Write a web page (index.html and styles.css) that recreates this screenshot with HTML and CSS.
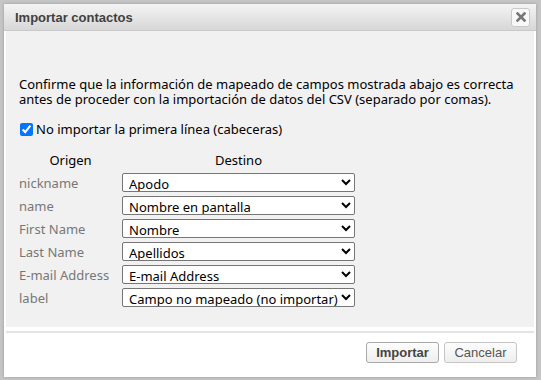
FILE: index.html
```html
<!DOCTYPE html>
<html lang="es">
<head>
  <meta charset="UTF-8" />
  <title>Importar contactos</title>
  <link rel="stylesheet" href="styles.css">
</head>
<body>
  <div class="dialog">
    <div class="titlebar">
      <span class="title">Importar contactos</span>
      <button class="close" title="Cerrar">
        <svg width="10" height="10" viewBox="0 0 10 10"><path d="M1.5 1.5 L8.5 8.5 M8.5 1.5 L1.5 8.5" stroke="#777" stroke-width="2.6" stroke-linecap="square"/></svg>
      </button>
    </div>
    <div class="content">
      <p class="intro">Confirme que la información de mapeado de campos mostrada abajo es correcta antes de proceder con la importación de datos del CSV (separado por comas).</p>
      <label class="skip"><input type="checkbox" checked /> No importar la primera línea (cabeceras)</label>
      <table class="mapping">
        <thead>
          <tr><th>Origen</th><th>Destino</th></tr>
        </thead>
        <tbody>
          <tr>
            <td class="src">nickname</td>
            <td><select><option>Apodo</option></select></td>
          </tr>
          <tr>
            <td class="src">name</td>
            <td><select><option>Nombre en pantalla</option></select></td>
          </tr>
          <tr>
            <td class="src">First Name</td>
            <td><select><option>Nombre</option></select></td>
          </tr>
          <tr>
            <td class="src">Last Name</td>
            <td><select><option>Apellidos</option></select></td>
          </tr>
          <tr>
            <td class="src">E-mail Address</td>
            <td><select><option>E-mail Address</option></select></td>
          </tr>
          <tr>
            <td class="src">label</td>
            <td><select><option>Campo no mapeado (no importar)</option></select></td>
          </tr>
        </tbody>
      </table>
    </div>
    <div class="buttons">
      <button class="btn main">Importar</button>
      <button class="btn">Cancelar</button>
    </div>
  </div>
</body>
</html>
```

FILE: styles.css
```css
html, body {
  margin: 0; padding: 0;
  height: 100%;
}
body {
  background: #c6c6c6;
  font-family: 'Noto Sans', 'Segoe UI', sans-serif;
  font-size: 13px;
  color: #333;
  padding: 4px 5px 0 4px;
  box-sizing: border-box;
}
.dialog {
  background: #fff;
  width: 532px;
  height: 373px;
  display: flex;
  flex-direction: column;
  box-shadow: 0 0 3px #999;
}
.titlebar {
  height: 26px;
  display: flex;
  align-items: center;
  justify-content: space-between;
  padding: 0 6px 0 11px;
  background: linear-gradient(#f4f4f4, #d7d7d7);
  border-bottom: 1px solid #c9c9c9;
  font-family: 'Liberation Sans', Arial, sans-serif;
}
.title {
  font-size: 13px;
  font-weight: bold;
  color: #404040;
}
.close {
  width: 19px; height: 19px;
  padding: 0;
  border: 1px solid #c8c8c8;
  border-radius: 3px;
  background: #f8f8f8;
  display: flex;
  align-items: center;
  justify-content: center;
}
.content {
  background: #f1f1f1;
  margin: 0 2px;
  padding: 46px 13px 0 13px;
  height: 250px;
  color: #000;
}
.intro {
  margin: 0 0 13px 0;
  line-height: 15px;
}
.skip {
  display: flex;
  align-items: center;
  gap: 3px;
}
.skip input {
  margin: 0 0 0 1px;
  width: 13px; height: 13px;
  accent-color: #0075ff;
}
.mapping {
  margin-top: 13px;
  border-collapse: collapse;
}
.mapping th {
  font-weight: normal;
  text-align: center;
  padding: 0 0 2px 0;
  height: 18px;
}
.mapping td {
  padding: 2px 0 2px 0;
  height: 19px;
}
.src {
  color: #777;
  padding-right: 4px !important;
  width: 99px;
}
select {
  display: block;
  width: 233px;
  height: 19px;
  font-family: inherit;
  font-size: 13px;
  line-height: 17px;
  color: #000;
  background: #fff;
  border: 1px solid #767676;
  border-radius: 2px;
  padding: 0 0 0 2px;
}
.buttons {
  border-top: 2px solid #e4e4e4;
  margin: 4px 2px 0 2px;
  flex: 1;
  display: flex;
  justify-content: flex-end;
  align-items: flex-start;
  gap: 5px;
  padding: 9px 17px 0 0;
}
.btn {
  font-family: 'Liberation Sans', Arial, sans-serif;
  font-size: 13px;
  color: #555;
  background: linear-gradient(#fdfdfd, #eee);
  border: 1px solid #c5c5c5;
  border-radius: 3px;
  height: 21px;
  width: 73px;
  padding: 0;
}
.btn.main {
  font-weight: bold;
  border-color: #a9a9a9;
  color: #444;
}
```
